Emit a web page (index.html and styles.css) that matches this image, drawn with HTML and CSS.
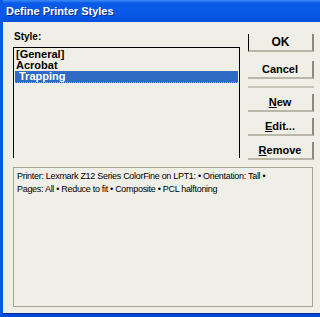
FILE: index.html
```html
<!DOCTYPE html>
<html lang="en">
<head>
  <meta charset="UTF-8" />
  <title>Define Printer Styles</title>
  <link rel="stylesheet" href="styles.css">
</head>
<body>
<div class="window">
  <div class="titlebar">Define Printer Styles</div>

  <div class="content">
    <div class="top-row">
      <div class="style-col">
        <div class="label">Style:</div>
        <ul class="listbox">
          <li>[General]</li>
          <li>Acrobat</li>
          <li class="selected">Trapping</li>
        </ul>
      </div>

      <div class="buttons">
        <button class="btn default">OK</button>
        <button class="btn">Cancel</button>
        <div class="separator"></div>
        <button class="btn"><u>N</u>ew</button>
        <button class="btn"><u>E</u>dit...</button>
        <button class="btn"><u>R</u>emove</button>
      </div>
    </div>

    <div class="summary">
      <p>Printer: Lexmark Z12 Series ColorFine on LPT1: &bull; Orientation: Tall &bull;</p>
      <p>Pages: All &bull; Reduce to fit &bull; Composite &bull; PCL halftoning</p>
    </div>
  </div>
</div>
</body>
</html>
```

FILE: styles.css
```css
:root {
  --face: #f0efe7;          /* dialog face */
  --xp-blue: #0a58e8;       /* frame blue */
  --select: #316ac5;        /* list selection */
  --shadow: #8c8a7c;        /* button shadow */
  --edge: #a6a596;          /* group border */
}

body {
  margin: 0;
  font-family: Tahoma, "DejaVu Sans", sans-serif;
  background: var(--face);
}

.window {
  width: 320px;
  height: 317px;
  box-sizing: border-box;
  border-left: 3px solid var(--xp-blue);
  border-bottom: 3px solid #0048d8;
  box-shadow: inset 0 -1px 0 #002c9c;
  background: var(--face);
  display: flex;
  flex-direction: column;
  overflow: hidden;
}

.titlebar {
  height: 22px;
  flex-shrink: 0;
  margin-left: -3px;
  padding-left: 6px;
  background: linear-gradient(to bottom, #3b8cf5 0, #0a5ae8 3px, #0759e6 14px, #0550dc 22px);
  color: white;
  font-family: "Liberation Sans", Arial, sans-serif;
  font-weight: bold;
  font-size: 11px;
  line-height: 23px;
  text-shadow: 1px 1px 0 #0a2c8c;
}

.content {
  flex: 1;
  padding: 8px 6px 7px 10px;
  display: flex;
  flex-direction: column;
}

.top-row {
  display: flex;
  align-items: flex-start;
  gap: 8px;
  height: 127px;
}

.style-col {
  width: 227px;
}

.label {
  font-family: "Liberation Sans", Arial, sans-serif;
  font-size: 10px;
  font-weight: bold;
  line-height: 13px;
  padding-left: 1px;
  margin-bottom: 4px;
}

.listbox {
  list-style: none;
  margin: 0;
  padding: 1px 1px 0;
  height: 109px;
  border: 1px solid #000;
  border-bottom: none;
  font-family: "Liberation Sans", Arial, sans-serif;
  font-size: 11px;
  font-weight: bold;
}

.listbox li {
  height: 11px;
  line-height: 11px;
  padding-left: 1px;
}

.listbox li.selected {
  background: var(--select);
  color: white;
  padding-left: 4px;
  border-bottom: 1px dotted #e8a040;
}

.buttons {
  width: 66px;
  padding-top: 4px;
  display: flex;
  flex-direction: column;
}

.btn {
  height: 18px;
  margin-bottom: 9px;
  padding: 0;
  background: var(--face);
  border: none;
  border-right: 2px solid var(--shadow);
  border-bottom: 2px solid #b9b7a8;
  font-family: "Liberation Sans", Arial, sans-serif;
  font-size: 11px;
  font-weight: bold;
  color: #000;
}

.btn.default {
  border-left: 1px solid #000;
  font-size: 12px;
}

.btn u {
  text-underline-offset: 1px;
}

.separator {
  height: 0;
  border-top: 2px solid #c8c6b8;
  margin: -2px 0 6px;
}

.buttons .btn:nth-of-type(3),
.buttons .btn:nth-of-type(4) {
  margin-bottom: 6px;
}

.summary {
  margin-top: 10px;
  height: 140px;
  width: 300px;
  box-sizing: border-box;
  border: 1px solid var(--edge);
  padding: 2px 3px;
  font-family: "Liberation Sans", Arial, sans-serif;
  font-size: 9px;
  letter-spacing: -0.3px;
}

.summary p {
  margin: 0;
  line-height: 13px;
  white-space: nowrap;
}
```
